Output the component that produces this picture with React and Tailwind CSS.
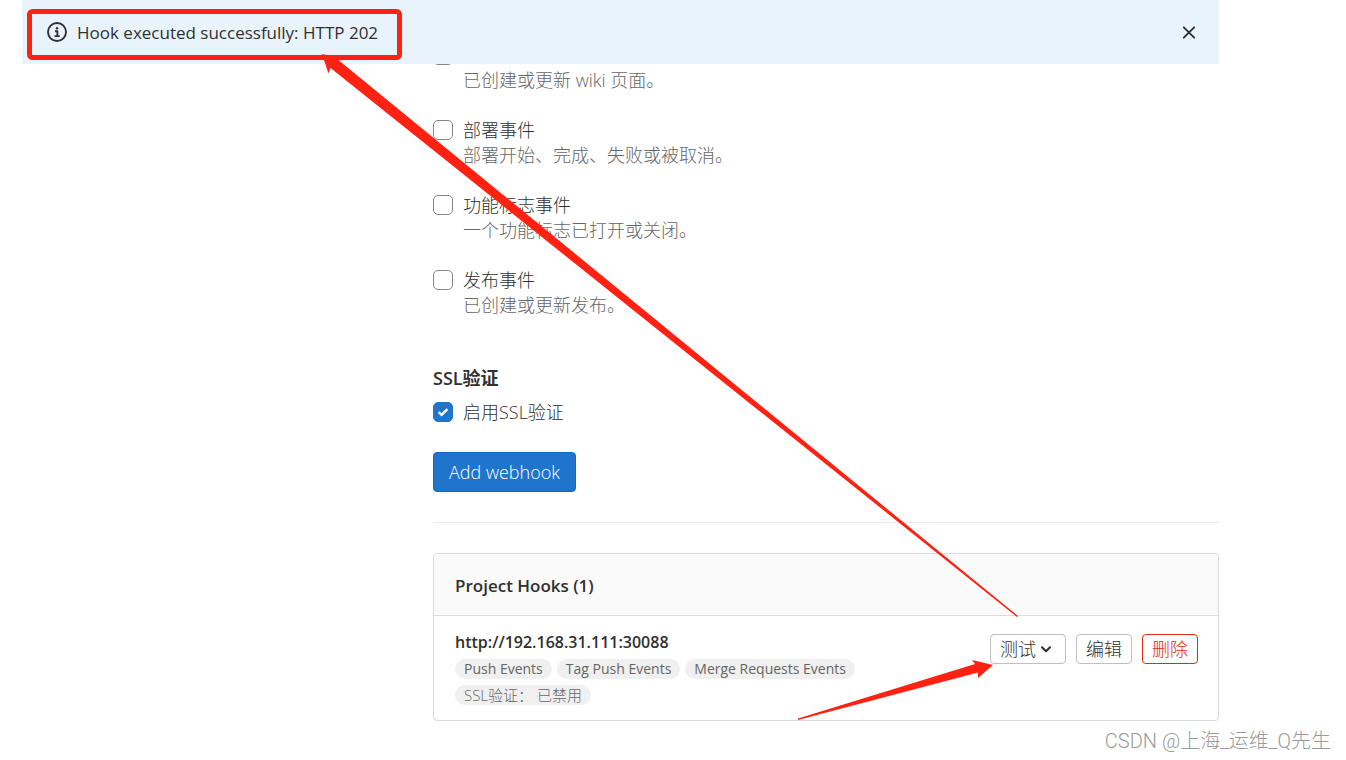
import { useState } from "react"
import clsx from "clsx"

const triggers = [
    { id: "wiki_page_events", title: "", description: "已创建或更新 wiki 页面。" },
    { id: "deployment_events", title: "部署事件", description: "部署开始、完成、失败或被取消。" },
    { id: "feature_flag_events", title: "功能标志事件", description: "一个功能标志已打开或关闭。" },
    { id: "releases_events", title: "发布事件", description: "已创建或更新发布。" },
]

const hook = {
    url: "http://192.168.31.111:30088",
    events: ["Push Events", "Tag Push Events", "Merge Requests Events"],
    ssl: "SSL验证： 已禁用",
}

const InfoIcon = () => (
    <svg className="size-5 shrink-0" viewBox="0 0 16 16" fill="none" stroke="currentColor" strokeWidth="1.5" aria-hidden="true">
        <circle cx="8" cy="8" r="7.2" />
        <path d="M6.4 7.4h1.9v3.8M6 11.3h4.2" />
        <circle cx="8" cy="4.9" r="1" fill="currentColor" stroke="none" />
    </svg>
)

const CloseIcon = () => (
    <svg className="size-5" viewBox="0 0 20 20" fill="none" stroke="currentColor" strokeWidth="1.9" strokeLinecap="round" aria-hidden="true">
        <path d="M4.8 5.3l10.4 10.4M15.2 5.3L4.8 15.7" />
    </svg>
)

const ChevronIcon = () => (
    <svg className="size-5" viewBox="0 0 20 20" fill="none" stroke="currentColor" strokeWidth="2" strokeLinecap="round" strokeLinejoin="round" aria-hidden="true">
        <path d="M6 8.2l4 4 4-4" />
    </svg>
)

const Checkbox = ({ id, checked, onChange }) => (
    <span className="grid size-5 shrink-0 mt-[2px]">
        <input
            id={id}
            type="checkbox"
            checked={checked}
            onChange={onChange}
            className="peer col-start-1 row-start-1 size-5 appearance-none rounded-[5px] border border-[#868686] bg-white checked:border-[#1f75cb] checked:bg-[#1f75cb]"
        />
        <svg className="pointer-events-none invisible col-start-1 row-start-1 size-5 peer-checked:visible" viewBox="0 0 20 20" fill="none" stroke="white" strokeWidth="2.4" aria-hidden="true">
            <path d="M5.6 10l3 2.9 5.8-5.7" />
        </svg>
    </span>
)

const smallButton = "h-[30px] rounded border bg-white px-[9px] leading-6"
const badge = "rounded-full bg-[#f0f0f0] px-[9px] leading-5 text-[#666666]"

const App = () => {
    const [checked, setChecked] = useState({ enable_ssl: true })

    const toggle = (id) => {
        setChecked({ ...checked, [id]: !checked[id] })
    }

    return (
        <div className="relative min-h-screen overflow-x-hidden bg-white font-['Open_Sans','Noto_Sans_CJK_SC',sans-serif] text-[18px] font-light leading-[25px] text-[#303030]">
            <div className="pl-[22px] pr-[127px]">

                {/* ALERT */}
                <div role="alert" className="sticky top-0 z-10 flex h-16 items-center gap-[10px] bg-[#e9f3fc] pl-[25px] pr-5">
                    <InfoIcon />
                    <span className="flex-1 text-[17px] font-normal">Hook executed successfully: HTTP 202</span>
                    <button type="button" aria-label="Close">
                        <CloseIcon />
                    </button>
                </div>

                <main className="-mt-[21px] grid grid-cols-3 gap-9">
                    <div className="col-span-2 col-start-2">

                        {/* TRIGGERS */}
                        <form onSubmit={(e) => e.preventDefault()}>
                            <div className="flex flex-col gap-[25px]">
                                {triggers.map((item) => (
                                    <div key={item.id} className="flex gap-[10px]">
                                        <Checkbox id={item.id} checked={!!checked[item.id]} onChange={() => toggle(item.id)} />
                                        <label htmlFor={item.id}>
                                            <span className="block h-[25px]">{item.title}</span>
                                            <span className="block text-[#666666]">{item.description}</span>
                                        </label>
                                    </div>
                                ))}
                            </div>

                            <h5 className="mt-12 font-semibold">SSL验证</h5>
                            <div className="mt-[9px] flex gap-[10px]">
                                <Checkbox id="enable_ssl" checked={checked.enable_ssl} onChange={() => toggle("enable_ssl")} />
                                <label htmlFor="enable_ssl">启用SSL验证</label>
                            </div>

                            <button type="submit" className="mt-[27px] h-10 rounded border border-[#1068bf] bg-[#1f75cb] px-[15px] text-white">
                                Add webhook
                            </button>
                        </form>

                        <hr className="my-[30px] border-[#ebebeb]" />

                        {/* HOOKS */}
                        <section className="rounded border border-[#dbdbdb]">
                            <h2 className="rounded-t border-b border-[#dbdbdb] bg-[#fafafa] px-[21px] pt-[19px] pb-[17px] text-[17px] font-semibold">
                                Project Hooks (1)
                            </h2>
                            <div className="flex items-start gap-5 pt-[14px] pr-5 pb-[15px] pl-[21px]">
                                <div className="min-w-0 flex-1">
                                    <strong className="block pb-1 text-[16px] font-semibold">{hook.url}</strong>
                                    <div className="flex max-w-[420px] flex-wrap gap-x-[5px] gap-y-[6px]">
                                        {hook.events.map((name) => (
                                            <span key={name} className={clsx(badge, "text-[14px] font-normal")}>{name}</span>
                                        ))}
                                        <span className={clsx(badge, "text-[15px]")}>{hook.ssl}</span>
                                    </div>
                                </div>
                                <div className="mt-1 flex gap-[10px]">
                                    <button type="button" className={clsx(smallButton, "flex items-center border-[#bfbfbf]")}>
                                        测试
                                        <ChevronIcon />
                                    </button>
                                    <button type="button" className={clsx(smallButton, "border-[#bfbfbf]")}>编辑</button>
                                    <button type="button" className={clsx(smallButton, "border-[#dd2b0e] text-[#dd2b0e]")}>删除</button>
                                </div>
                            </div>
                        </section>

                    </div>
                </main>
            </div>

            {/* Annotations */}
            <svg className="pointer-events-none absolute top-0 left-0 z-20" width="1346" height="760" viewBox="0 0 1346 760" fill="#ff2112" aria-hidden="true">
                <rect x="29.5" y="11.5" width="370" height="46" rx="3" fill="none" stroke="#ff2112" strokeWidth="5" />
                <path d="M322 54L342 58L339 60.500L1018 616L1017 617L330.500 68L328.500 73.500Z" />
                <path d="M798 718.500L975 664L972 660L993 665L978 678L978 672.500L798 720Z" />
            </svg>

            <p className="absolute right-[15px] bottom-[6px] font-['Roboto','Noto_Sans_CJK_SC',sans-serif] text-[20px] text-[#999999]">
                CSDN @上海_运维_Q先生
            </p>
        </div>
    )
}

export default App
